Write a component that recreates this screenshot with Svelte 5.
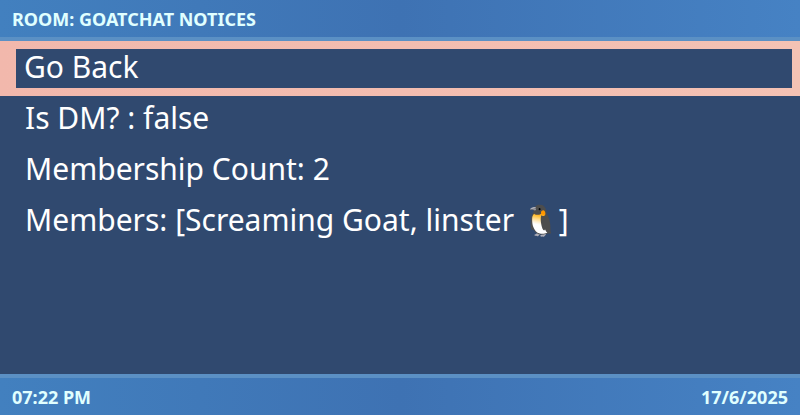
<script>
	const rows = [
		{ label: "Go Back", selected: true },
		{ label: "Is DM? : false" },
		{ label: "Membership Count: 2" },
		{ label: "Members: [Screaming Goat, linster 🐧]" }
	];
</script>

<div class="screen">
	<header class="bar top">ROOM: GOATCHAT NOTICES</header>
	<main class="list">
		{#each rows as row}
			<div class="row" class:selected={row.selected}>
				<div class="label">{row.label}</div>
			</div>
		{/each}
	</main>
	<footer class="bar bottom">
		<span>07:22 PM</span>
		<span>17/6/2025</span>
	</footer>
</div>

<style>
	:global(body) {
		margin: 0;
		background: #30496f;
	}

	.screen {
		width: 800px;
		height: 415px;
		display: flex;
		flex-direction: column;
		overflow: hidden;
		background: #30496f;
		font-family: "Noto Sans", sans-serif;
	}

	.bar {
		display: flex;
		justify-content: space-between;
		align-items: center;
		box-sizing: border-box;
		padding: 0 12px;
		color: #e0ffff;
		font-size: 18px;
		font-weight: 700;
		background: linear-gradient(90deg, #4280bf 0%, #3e72b3 50%, #4682c4 100%);
	}

	.top {
		height: 41px;
		border-bottom: 4px solid #5b90c4;
	}

	.bottom {
		height: 41px;
		border-top: 4px solid #5b90c4;
	}

	.list {
		flex: 1;
	}

	.row {
		padding: 4px 8px 8px 16px;
		color: #fff;
		font-size: 30px;
	}

	.row.selected {
		padding-top: 8px;
		background: linear-gradient(90deg, #f2b8ac, #f4c2b4);
	}

	.label {
		box-sizing: border-box;
		height: 39px;
		padding-left: 9px;
		line-height: 36px;
		background: #30496f;
		white-space: pre;
	}

	.selected .label {
		padding-left: 8px;
	}
</style>
